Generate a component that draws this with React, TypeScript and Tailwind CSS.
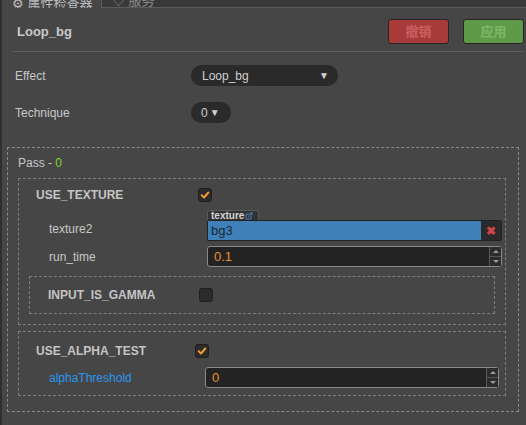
import { ExternalLink } from "lucide-react";

const font = "font-['Liberation_Sans','Noto_Sans_CJK_SC',sans-serif]";

function Check({ on }: { on?: boolean }) {
  return (
    <div className="flex h-[14px] w-[14px] items-center justify-center rounded-[3px] border border-[#1e1e1e] bg-[#2b2b2b]">
      {on && (
        <svg viewBox="0 0 12 12" className="h-[10px] w-[10px]">
          <path d="M2 6.2 L4.8 9 L10 3" fill="none" stroke="#f39a2c" strokeWidth="2.4" strokeLinecap="round" strokeLinejoin="round" />
        </svg>
      )}
    </div>
  );
}

function NumberField({ value }: { value: string }) {
  return (
    <div className="flex h-[21px] flex-1 rounded-[3px] border border-[#8a8a8a] bg-[#232323]">
      <div className="flex flex-1 items-center pl-[6px] text-[13px] text-[#ea8f2c]">{value}</div>
      <div className="flex w-[12px] flex-col border-l border-[#5a5a5a] bg-[#2c2c2c]">
        <div className="flex flex-1 items-center justify-center border-b border-[#555]">
          <div className="h-0 w-0 border-x-[3px] border-b-[3px] border-x-transparent border-b-[#9a9a9a]" />
        </div>
        <div className="flex flex-1 items-center justify-center">
          <div className="h-0 w-0 border-x-[3px] border-t-[3px] border-x-transparent border-t-[#9a9a9a]" />
        </div>
      </div>
    </div>
  );
}

export default function App() {
  return (
    <div className={`${font} h-[425px] w-[526px] overflow-hidden border-l-2 border-[#2f2f2f] bg-[#464646] text-[#c8c8c8]`}>
      {/* tab strip, mostly cut off */}
      <div className="flex h-[8px] overflow-hidden">
        <div className="flex w-[99px] items-end gap-[6px] pl-[10px]">
          <div className="-mb-[2px] text-[13px] leading-[13px] text-[#bdbdbd]">⚙ 属性检查器</div>
        </div>
        <div className="flex flex-1 border-b border-l border-[#5c5c5c] bg-[#393939]">
          <div className="-mt-[6px] pl-[10px] text-[13px] leading-[13px] text-[#8e8e8e]">♡ 服务</div>
        </div>
      </div>

      {/* header */}
      <div className="flex items-center pl-[15px] pr-[2px] pt-[11px]">
        <div className="flex-1 text-[13px] font-bold text-[#c9c9c9]">Loop_bg</div>
        <button className="flex h-[25px] w-[61px] items-center justify-center rounded-[3px] border border-[#262626] bg-[#a83a3a] text-[13px] font-bold text-[#c96060]">
          撤销
        </button>
        <button className="ml-[14px] flex h-[25px] w-[61px] items-center justify-center rounded-[3px] border border-[#262626] bg-[#5e9a48] text-[13px] font-bold text-[#7cb867]">
          应用
        </button>
      </div>
      <div className="ml-[10px] mr-[2px] mt-[7px] h-px bg-[#5e5e5e]" />

      {/* effect / technique */}
      <div className="mt-[13px] flex items-center pl-[13px]">
        <div className="w-[176px] text-[12px]">Effect</div>
        <div className="flex h-[21px] w-[147px] items-center justify-between rounded-full bg-[#2a2a2a] pl-[11px] pr-[9px] text-[12px] text-[#d0d0d0]">
          <span>Loop_bg</span>
          <span className="text-[10px]">▼</span>
        </div>
      </div>
      <div className="mt-[16px] flex items-center pl-[13px]">
        <div className="w-[176px] text-[12px]">Technique</div>
        <div className="flex h-[21px] w-[40px] items-center gap-[2px] rounded-full bg-[#2a2a2a] pl-[10px] text-[12px] text-[#d0d0d0]">
          <span>0</span>
          <span className="text-[10px]">▼</span>
        </div>
      </div>

      {/* pass */}
      <div className="ml-[5px] mr-[7px] mt-[24px] border border-dashed border-[#8a8a8a] pb-[15px]">
        <div className="pl-[10px] pt-[8px] text-[12px] leading-[14px]">
          Pass - <span className="text-[#7cd82a]">0</span>
        </div>

        <div className="ml-[10px] mr-[12px] mt-[8px] border border-dashed border-[#7e7e7e] pb-[10px]">
          <div className="mt-[7px] flex items-center pl-[17px]">
            <div className="w-[162px] text-[12px] font-bold text-[#c4c4c4]">USE_TEXTURE</div>
            <Check on />
          </div>

          <div className="mt-[6px] flex items-end pl-[30px] pr-[3px]">
            <div className="w-[158px] pb-[3px] text-[12px]">texture2</div>
            <div className="flex flex-1 flex-col">
              <div className="flex h-[10px] w-[52px] items-center gap-[1px] rounded-t-[3px] border border-b-0 border-[#5a5a5a] bg-[#333] pl-[3px] text-[10px] font-bold leading-none text-[#d4d4d4]">
                texture
                <ExternalLink className="h-[8px] w-[8px] text-[#4a98e0]" strokeWidth={2.5} />
              </div>
              <div className="flex h-[21px] rounded-[2px] border border-[#222]">
                <div className="flex flex-1 items-center bg-[#3f80b8] pl-[3px] text-[13px] text-[#1c2633]">bg3</div>
                <div className="flex w-[20px] items-center justify-center bg-[#2a2a2a] text-[12px] font-bold text-[#d04545]">✖</div>
              </div>
            </div>
          </div>

          <div className="mt-[5px] flex items-center pl-[30px] pr-[3px]">
            <div className="w-[158px] text-[12px]">run_time</div>
            <NumberField value="0.1" />
          </div>

          <div className="ml-[10px] mr-[10px] mt-[9px] flex h-[38px] items-center border border-dashed border-[#7e7e7e] pl-[18px]">
            <div className="w-[151px] text-[12px] font-bold text-[#c4c4c4]">INPUT_IS_GAMMA</div>
            <Check />
          </div>
        </div>

        <div className="ml-[10px] mr-[12px] mt-[6px] border border-dashed border-[#7e7e7e] pb-[7px]">
          <div className="mt-[10px] flex items-center pl-[17px]">
            <div className="w-[159px] text-[12px] font-bold text-[#c4c4c4]">USE_ALPHA_TEST</div>
            <Check on />
          </div>
          <div className="mt-[7px] flex items-center pl-[30px] pr-[6px]">
            <div className="w-[156px] text-[12px] text-[#2a96f0]">alphaThreshold</div>
            <NumberField value="0" />
          </div>
        </div>
      </div>
    </div>
  );
}
